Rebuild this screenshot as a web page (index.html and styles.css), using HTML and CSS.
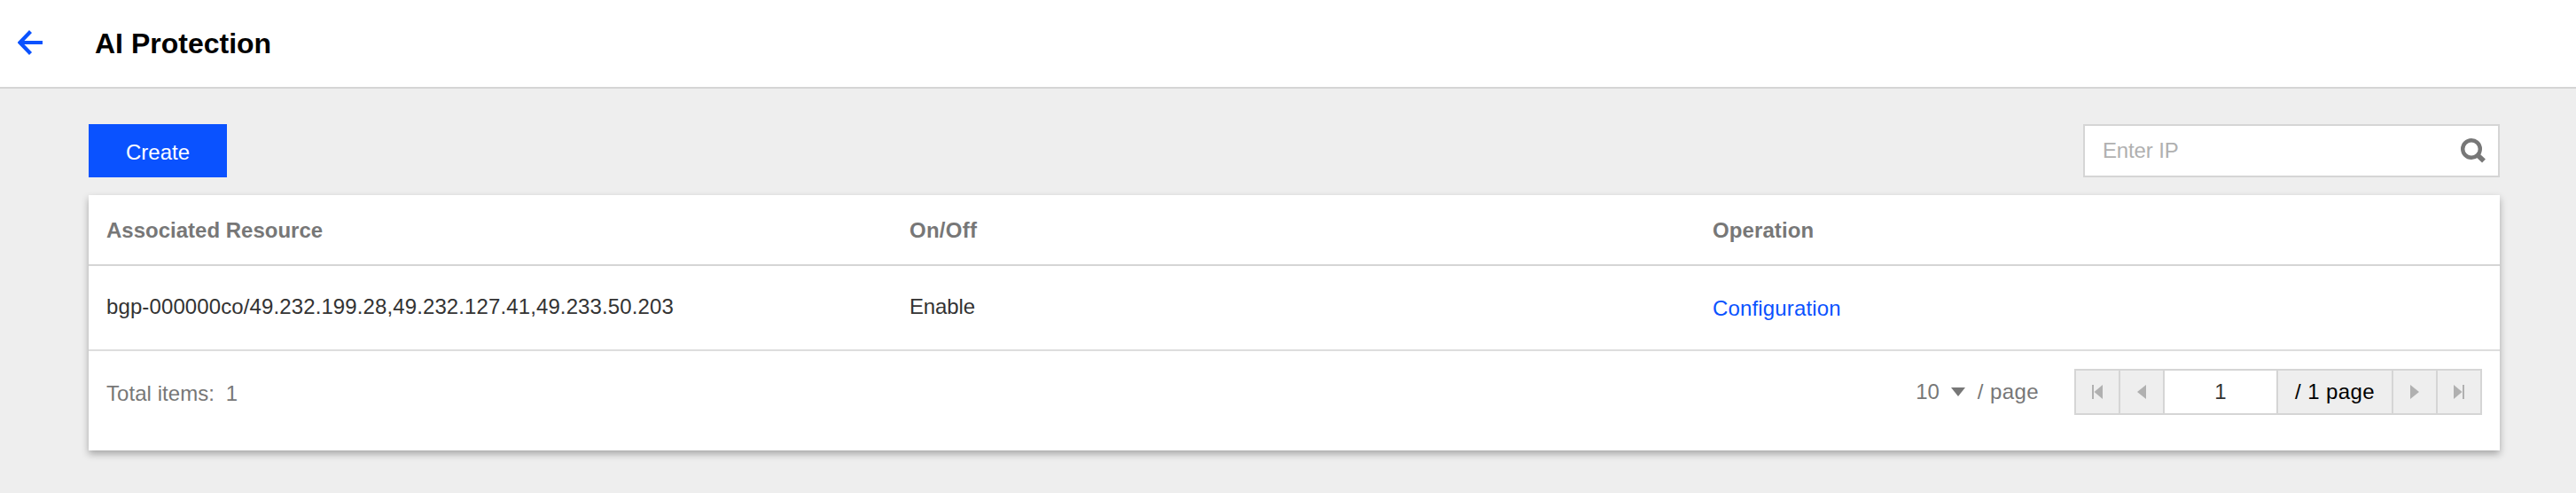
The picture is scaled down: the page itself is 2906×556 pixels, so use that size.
FILE: index.html
```html
<!DOCTYPE html>
<html lang="en">
<head>
<meta charset="utf-8">
<title>AI Protection</title>
<link rel="stylesheet" href="styles.css">
</head>
<body>
<header class="header">
  <a class="back" href="#" aria-label="Back"><svg width="28" height="28" viewBox="0 0 28 28"><path d="M14.500 1.500 2.500 14l12 12.500M3 14H28" fill="none" stroke="#0a52ff" stroke-width="4.200"/></svg></a>
  <h1 class="title">AI Protection</h1>
</header>
<main class="content">
  <div class="toolbar">
    <button class="create">Create</button>
    <label class="search">
      <input class="search-input" type="text" placeholder="Enter IP">
      <svg width="28" height="28" viewBox="0 0 28 28"><circle cx="12" cy="12" r="9.800" fill="none" stroke="#777" stroke-width="4.400"/><path d="M18.500 18.500 26 25.500" stroke="#777" stroke-width="5.600"/></svg>
    </label>
  </div>
  <section class="card">
    <div class="row head">
      <div class="cell">Associated Resource</div>
      <div class="cell onoff">On/Off</div>
      <div class="cell operation">Operation</div>
    </div>
    <div class="row body">
      <div class="cell resource">bgp-000000co/49.232.199.28,49.232.127.41,49.233.50.203</div>
      <div class="cell enable">Enable</div>
      <div class="cell"><a class="link" href="#">Configuration</a></div>
    </div>
    <footer class="footer">
      <div class="total">Total items: <span class="count">1</span></div>
      <div class="size"><span>10</span><svg class="caret" width="16" height="10" viewBox="0 0 16 10"><path d="M0 0H16L8 10z" fill="#777"/></svg><span class="per">/ page</span></div>
      <div class="pager">
        <span class="step"><svg width="12" height="16" viewBox="0 0 12 16"><path d="M0 0H2V16H0zM12 0V16L2.500 8z" fill="#b0b0b0"/></svg></span>
        <span class="step"><svg width="10" height="16" viewBox="0 0 10 16"><path d="M10 0V16L0 8z" fill="#b0b0b0"/></svg></span>
        <span class="current">1</span>
        <span class="pages">/ 1 page</span>
        <span class="step"><svg width="10" height="16" viewBox="0 0 10 16"><path d="M0 0V16L10 8z" fill="#b0b0b0"/></svg></span>
        <span class="step"><svg width="12" height="16" viewBox="0 0 12 16"><path d="M10 0H12V16H10zM0 0V16L9.500 8z" fill="#b0b0b0"/></svg></span>
      </div>
    </footer>
  </section>
</main>
</body>
</html>
```
FILE: styles.css
```css
* { box-sizing: border-box; }
body {
  margin: 0;
  min-height: 556px;
  background: #eee;
  color: #333;
  font: 24px/36px "Liberation Sans", Arial, sans-serif;
}
svg { display: block; flex: none; }
a { text-decoration: none; }
.header {
  display: flex;
  align-items: center;
  height: 100px;
  padding: 0 20px 2px;
  background: #fff;
  border-bottom: 2px solid #d5d5d5;
}
.title { margin: 0 0 0 59px; padding-top: 2px; font-size: 32px; line-height: 40px; font-weight: bold; color: #000; }
.content { padding: 40px 86px 0 100px; }
.toolbar { display: flex; justify-content: space-between; margin-bottom: 20px; }
.create {
  width: 156px;
  height: 60px;
  padding: 4px 0 0;
  border: 0;
  background: #0a52ff;
  color: #fff;
  font: inherit;
}
.search {
  display: flex;
  align-items: center;
  width: 470px;
  height: 60px;
  padding: 0 14px 0 20px;
  background: #fff;
  border: 2px solid #d5d5d5;
}
.search-input { flex: 1; min-width: 0; padding: 0; border: 0; outline: 0; background: none; font: inherit; letter-spacing: -.15px; }
.search-input::placeholder { color: #b0b0b0; opacity: 1; }
.card { height: 288px; background: #fff; box-shadow: 0 4px 8px rgba(0, 0, 0, .3); }
.row { display: grid; grid-template-columns: 906px 906px 1fr; }
.cell { padding: 0 20px; }
.head { height: 80px; padding-top: 22px; border-bottom: 2px solid #d5d5d5; color: #777; font-weight: bold; }
.body { height: 96px; padding-top: 28px; border-bottom: 2px solid #ddd; }
.onoff { letter-spacing: .25px; }
.operation { letter-spacing: .1px; }
.resource { letter-spacing: .11px; }
.enable { letter-spacing: -.15px; }
.link { display: block; padding-top: 2px; color: #0a52ff; letter-spacing: .15px; }
.footer { display: flex; align-items: flex-start; padding: 20px 20px 0; color: #777; }
.total { margin-right: auto; padding-top: 10px; letter-spacing: .05px; }
.count { margin-left: 6px; }
.size { display: flex; align-items: center; margin-right: 40px; padding-top: 8px; }
.caret { margin: 0 14px 0 13px; }
.per { letter-spacing: .4px; }
.pager { display: flex; height: 52px; border: 2px solid #d5d5d5; background: #eee; }
.pager > * { display: flex; align-items: center; justify-content: center; border-right: 2px solid #d5d5d5; }
.pager > :last-child { border-right: 0; }
.step { width: 50px; }
.step:last-child { width: 48px; }
.current { width: 128px; background: #fff; color: #333; }
.pages { width: 130px; color: #000; letter-spacing: .4px; }
```
